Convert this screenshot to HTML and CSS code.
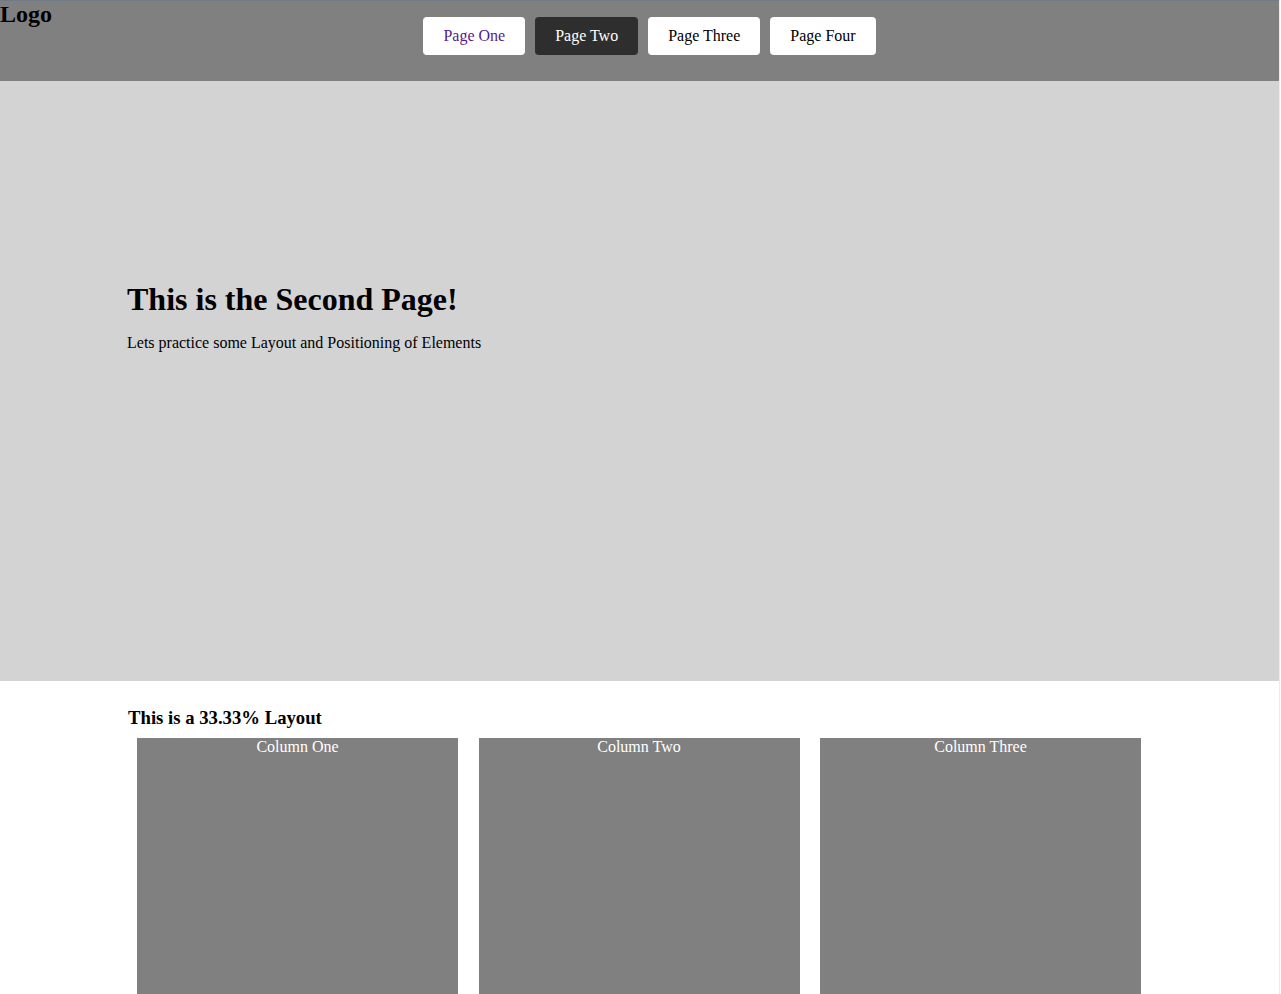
FILE: index.html
```html
<!DOCTYPE html>
<html lang="en">
<head>
<meta charset="utf-8">
<title>Page Two</title>
<link rel="stylesheet" href="styles.css">
</head>
<body>
<header class="site-header">
  <div class="logo">Logo</div>
  <nav class="nav">
    <a class="nav-btn visited" href="#">Page One</a>
    <a class="nav-btn active" href="#">Page Two</a>
    <a class="nav-btn" href="#">Page Three</a>
    <a class="nav-btn" href="#">Page Four</a>
  </nav>
  <div class="spacer"></div>
</header>
<section class="hero">
  <h1 class="hero-title">This is the Second Page!</h1>
  <p class="hero-text">Lets practice some Layout and Positioning of Elements</p>
</section>
<section class="layout">
  <h3 class="layout-title">This is a 33.33% Layout</h3>
  <div class="columns">
    <div class="column">Column One</div>
    <div class="column">Column Two</div>
    <div class="column">Column Three</div>
  </div>
</section>
</body>
</html>
```
FILE: styles.css
```css
html {
  background: #ffffff;
}
body {
  margin: 0 1px 0 0;
  border-right: 1px solid #ececec;
  font-family: "Liberation Serif", "Times New Roman", serif;
  font-size: 16px;
  color: #000;
  background: #ffffff;
  width: 1279px;
}
.site-header {
  display: grid;
  grid-template-columns: 1fr auto 1fr;
  align-items: start;
  height: 80px;
  background: #808080;
  border-top: 1px solid #6f7c88;
  width: 1280px;
}
.logo {
  font-size: 24px;
  font-weight: bold;
  line-height: 27px;
  margin: 0;
}
.nav {
  display: flex;
  gap: 10px;
  padding-top: 16px;
  padding-left: 19px;
}
.nav-btn {
  display: block;
  padding: 10px 20px;
  line-height: 18px;
  background: #ffffff;
  color: #000000;
  text-decoration: none;
  border-radius: 4px;
}
.nav-btn.visited {
  color: #551a8b;
}
.nav-btn.active {
  background: #2e2e2e;
  color: #ffffff;
}
.hero {
  height: 600px;
  box-sizing: border-box;
  background: #d3d3d3;
  padding: 200px 0 0 127px;
  width: 1280px;
}
.hero-title {
  margin: 0;
  font-size: 32px;
  font-weight: bold;
  line-height: 36px;
}
.hero-text {
  margin: 17px 0 0;
  line-height: 18px;
}
.layout {
  width: 1024px;
  margin: 0 auto 0 128px;
  padding-top: 26px;
}
.layout-title {
  margin: 0 0 10px;
  font-size: 18.72px;
  line-height: 21px;
}
.columns {
  display: grid;
  grid-template-columns: repeat(3, 321px);
  column-gap: 20.5px;
  margin: 0 11px 0 9px;
}
.column {
  height: 300px;
  background: #808080;
  color: #ffffff;
  text-align: center;
  line-height: 18px;
}
```
